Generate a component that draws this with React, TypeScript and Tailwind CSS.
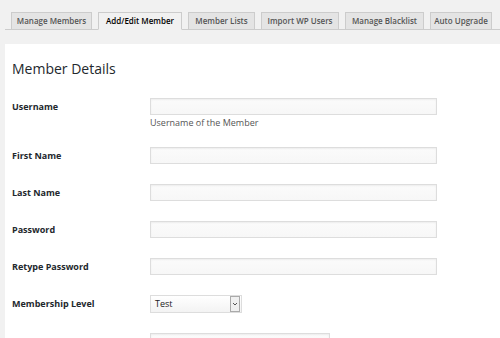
import React from "react";

const tabs = [
  { label: "Manage Members", w: "w-[81px]" },
  { label: "Add/Edit Member", w: "w-[84px]", active: true },
  { label: "Member Lists", w: "w-[67px]" },
  { label: "Import WP Users", w: "w-[78px]" },
  { label: "Manage Blacklist", w: "w-[79px]" },
  { label: "Auto Upgrade", w: "w-[62px]" },
];

function TextInput({ w = "w-[287px]" }: { w?: string }) {
  return (
    <div
      className={`${w} h-[17px] border border-[#dddddd] bg-gradient-to-b from-[#fbfbfb] to-[#f7f7f7] shadow-[inset_0_1px_2px_rgba(0,0,0,0.06)]`}
    />
  );
}

function Row({
  label,
  children,
  pb = "pb-[10px]",
}: {
  label: string;
  children: React.ReactNode;
  pb?: string;
}) {
  return (
    <div className={`flex pt-[10px] ${pb}`}>
      <div className="w-[138px] pt-[2px] text-[9px] leading-[13px] font-bold text-[#23282d]">
        {label}
      </div>
      <div>{children}</div>
    </div>
  );
}

export default function App() {
  return (
    <div
      className="w-[500px] h-[338px] overflow-hidden bg-[#f1f1f1]"
      style={{ fontFamily: '"Open Sans", "Noto Sans", sans-serif' }}
    >
      <div className="ml-[5px] pt-[12px] pl-[6px] flex gap-[6px] border-b border-[#cccccc]">
        {tabs.map((t) =>
          t.active ? (
            <div
              key={t.label}
              className={`${t.w} h-[18px] -mb-px flex items-center justify-center border border-[#cccccc] border-b-[#f1f1f1] bg-[#f1f1f1] text-[8px] font-semibold text-black whitespace-nowrap`}
            >
              {t.label}
            </div>
          ) : (
            <div
              key={t.label}
              className={`${t.w} h-[18px] -mb-px flex items-center justify-center border border-[#cccccc] bg-[#e4e4e4] text-[8px] font-semibold text-[#555555] whitespace-nowrap`}
            >
              {t.label}
            </div>
          )
        )}
      </div>
      <div className="ml-[5px] mt-[14px] bg-white pt-[15px] pl-[7px] h-[400px]">
        <h2 className="text-[14px] leading-[20px] text-[#23282d] mb-[9px]">
          Member Details
        </h2>
        <Row label="Username" pb="pb-[8px]">
          <TextInput />
          <div className="text-[9px] leading-[12px] mt-[2px] text-[#555555]">
            Username of the Member
          </div>
        </Row>
        <Row label="First Name">
          <TextInput />
        </Row>
        <Row label="Last Name">
          <TextInput />
        </Row>
        <Row label="Password">
          <TextInput />
        </Row>
        <Row label="Retype Password">
          <TextInput />
        </Row>
        <Row label="Membership Level">
          <div className="w-[92px] h-[18px] border border-[#dddddd] bg-gradient-to-b from-white to-[#f3f3f3] flex items-center justify-between">
            <span className="pl-[4px] text-[9px] text-[#222222]">Test</span>
            <div className="w-[10px] h-[16px] mr-px border border-[#aaaaaa] bg-[#f0f0f0] flex items-center justify-center">
              <svg width="6" height="4" viewBox="0 0 6 4">
                <path d="M1 1 L3 3 L5 1" stroke="#555" strokeWidth="1" fill="none" />
              </svg>
            </div>
          </div>
        </Row>
        <Row label="">
          <TextInput w="w-[180px]" />
        </Row>
      </div>
    </div>
  );
}
